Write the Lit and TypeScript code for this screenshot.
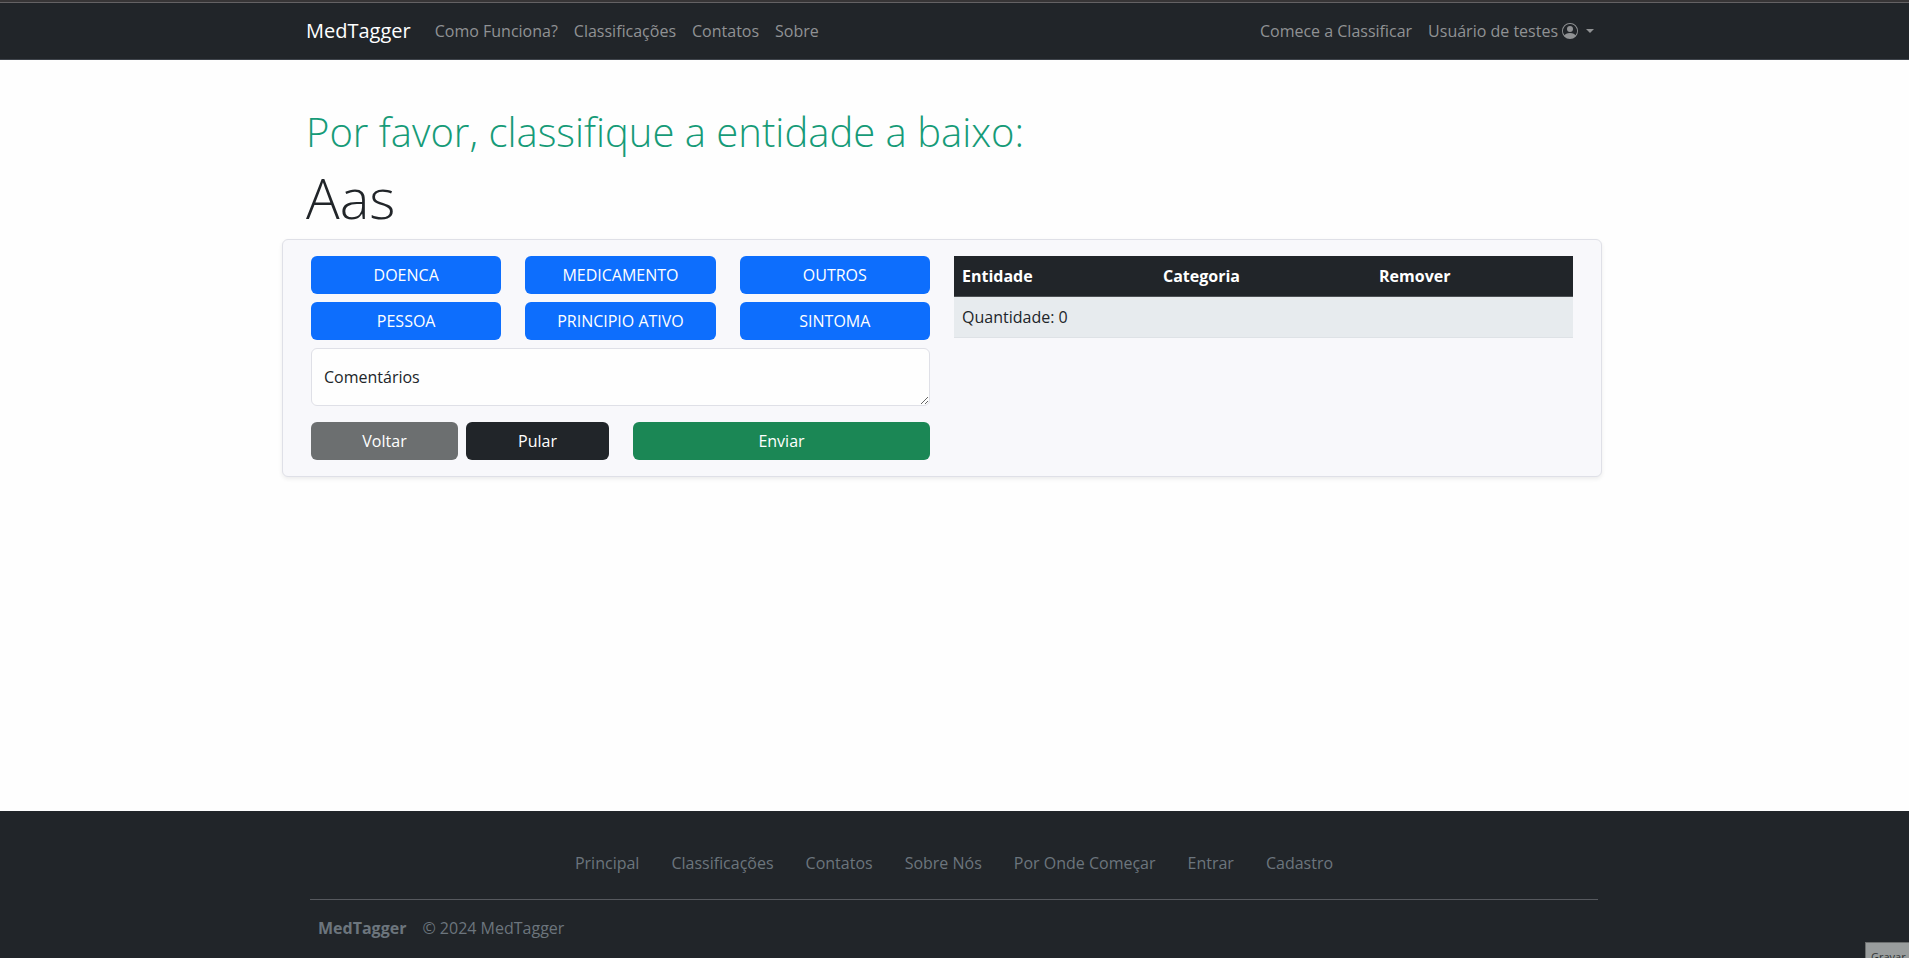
import { LitElement, html, css } from "lit";
import { customElement } from "lit/decorators.js";

const CATEGORIES = ["DOENCA", "MEDICAMENTO", "OUTROS", "PESSOA", "PRINCIPIO ATIVO", "SINTOMA"];
const NAV = ["Como Funciona?", "Classificações", "Contatos", "Sobre"];
const FOOTER = ["Principal", "Classificações", "Contatos", "Sobre Nós", "Por Onde Começar", "Entrar", "Cadastro"];

@customElement("app-root")
export class AppRoot extends LitElement {
  static styles = css`
    :host {
      display: flex; flex-direction: column; height: 958px; overflow: hidden; position: relative;
      background: #fefefe; color: #212529;
      font: 400 16px/24px "Open Sans", "Noto Sans", sans-serif;
    }
    * { box-sizing: border-box; }
    a { color: inherit; text-decoration: none; }
    .topline { height: 3px; background: #373536; border-bottom: 1px solid #646264; flex: none; }
    header { height: 57px; padding-right: 1px; background: #212529; border-bottom: 1px solid #3f444b; flex: none; }
    .bar {
      width: 1296px; height: 56px; margin: 0 auto; display: flex; align-items: center;
      color: #909294;
    }
    .brand { color: #fff; font-size: 20px; line-height: 30px; margin-right: 16px; }
    .bar a.link { padding: 8px; white-space: nowrap; }
    .spacer { flex: 1; }
    .user { display: flex; align-items: center; }
    .user svg { margin-left: 4px; }
    .caret { margin-left: 8px; border: 4.8px solid transparent; border-top-color: currentColor; border-bottom: 0; }
    main { width: 1297px; padding-right: 1px; align-self: center; flex: 1; padding-top: 48px; }
    h1, h2 { margin: 0; font-weight: 300; white-space: nowrap; }
    h1 { font-size: 40px; line-height: 48px; color: #169b78; margin-bottom: 8px; }
    h2 { font-size: 56px; line-height: 67px; margin-bottom: 8px; }
    .card {
      margin-left: -24px; width: 1320px; height: 238px; display: flex; gap: 24px;
      padding: 16px 28px 16px 28px; border: 1px solid #dfe0e7; border-radius: 6px;
      background: #f8f8fb; box-shadow: 0 2px 4px rgba(0, 0, 0, 0.075);
    }
    .form { width: 619px; }
    .grid { display: grid; grid-template-columns: repeat(3, 1fr); gap: 8px 24px; }
    button {
      height: 38px; border: 0; border-radius: 6px; padding: 0; color: #fff;
      font: inherit; background: #0d6efd;
    }
    textarea {
      display: block; width: 100%; height: 58px; margin: 8px 0 16px; padding: 16px 12px;
      border: 1px solid #dfe0e7; border-radius: 6px; background: #fefefe; resize: vertical;
      font: inherit; color: inherit; overflow: hidden; outline: none;
    }
    textarea::placeholder { color: #212529; opacity: 1; }
    .actions { display: grid; grid-template-columns: 147px 143px 1fr; column-gap: 8px; }
    .back { background: #6c6f70; }
    .skip { background: #212529; }
    .send { background: #1b8755; margin-left: 16px; }
    table { width: 619px; border-spacing: 0; table-layout: fixed; align-self: flex-start; }
    th, td { padding: 8px; text-align: left; height: 41px; border-bottom: 1px solid #dee2e6; }
    th { background: #212529; color: #fff; font-weight: 700; border-bottom-color: #4d5154; }
    td { background: #e7ebee; }
    .c1 { width: 201px; }
    .c2 { width: 216px; }
    footer { height: 147px; padding-right: 1px; flex: none; background: #212529; color: #6c757d; }
    .links { display: flex; justify-content: center; gap: 32px; padding: 40px 0 24px; white-space: nowrap; }
    .legal {
      width: 1288px; margin: 0 auto; border-top: 1px solid #56595e; padding: 16px 8px 0;
      display: flex; gap: 16px;
    }
    .recorder {
      position: absolute; left: 1865px; top: 942px; width: 44px; height: 16px; overflow: hidden;
      background: #999d9d; border: solid #6b6e6e; border-width: 1px 0 0 1px; color: #303434;
      font: 11px/16px "Open Sans", sans-serif; padding: 6px 0 0 5px;
    }
  `;

  render() {
    return html`
      <div class="topline"></div>
      <header>
        <nav class="bar">
          <a class="brand" href="#">MedTagger</a>
          ${NAV.map((n) => html`<a class="link" href="#">${n}</a>`)}
          <span class="spacer"></span>
          <a class="link" href="#">Comece a Classificar</a>
          <a class="link user" href="#">Usuário de testes
            <svg width="16" height="16" viewBox="0 0 16 16" fill="currentColor">
              <path d="M11 6a3 3 0 1 1-6 0 3 3 0 0 1 6 0" />
              <path fill-rule="evenodd" d="M0 8a8 8 0 1 1 16 0A8 8 0 0 1 0 8m8-7a7 7 0 0 0-5.468 11.37C3.242 11.226 4.805 10 8 10s4.757 1.225 5.468 2.37A7 7 0 0 0 8 1" />
            </svg>
            <span class="caret"></span>
          </a>
        </nav>
      </header>
      <main>
        <h1>Por favor, classifique a entidade a baixo:</h1>
        <h2>Aas</h2>
        <section class="card">
          <div class="form">
            <div class="grid">${CATEGORIES.map((c) => html`<button>${c}</button>`)}</div>
            <textarea placeholder="Comentários"></textarea>
            <div class="actions">
              <button class="back">Voltar</button>
              <button class="skip">Pular</button>
              <button class="send">Enviar</button>
            </div>
          </div>
          <table>
            <thead>
              <tr><th class="c1">Entidade</th><th class="c2">Categoria</th><th>Remover</th></tr>
            </thead>
            <tbody>
              <tr><td colspan="3">Quantidade: 0</td></tr>
            </tbody>
          </table>
        </section>
      </main>
      <footer>
        <nav class="links">${FOOTER.map((f) => html`<a href="#">${f}</a>`)}</nav>
        <div class="legal"><strong>MedTagger</strong><span>© 2024 MedTagger</span></div>
      </footer>
      <div class="recorder">Gravar</div>
    `;
  }
}
